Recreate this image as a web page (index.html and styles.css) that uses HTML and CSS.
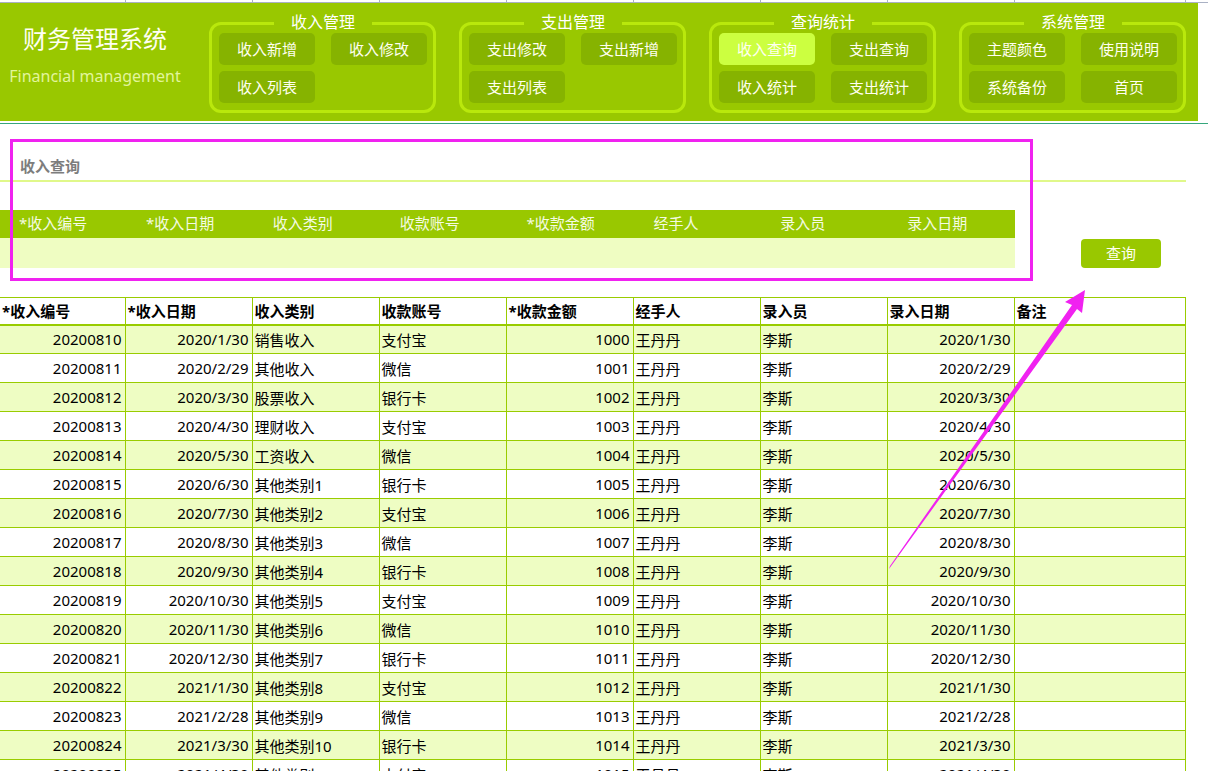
FILE: index.html
```html
<!DOCTYPE html>
<html lang="zh-CN">
<head>
<meta charset="utf-8">
<title>财务管理系统</title>
<link rel="stylesheet" href="styles.css">
</head>
<body>
<div class="sheet-top">
  <span class="c1"></span><span></span><span></span><span></span><span></span><span></span><span></span><span></span><span class="c9"></span>
</div>
<header class="banner">
  <div class="brand">
    <div class="brand-title">财务管理系统</div>
    <div class="brand-sub">Financial management</div>
  </div>
  <nav class="groups">
    <fieldset class="group">
      <legend>收入管理</legend>
      <div class="btns">
        <span class="btn">收入新增</span><span class="btn">收入修改</span><span class="btn">收入列表</span>
      </div>
    </fieldset>
    <fieldset class="group">
      <legend>支出管理</legend>
      <div class="btns">
        <span class="btn">支出修改</span><span class="btn">支出新增</span><span class="btn">支出列表</span>
      </div>
    </fieldset>
    <fieldset class="group">
      <legend>查询统计</legend>
      <div class="btns">
        <span class="btn active">收入查询</span><span class="btn">支出查询</span><span class="btn">收入统计</span><span class="btn">支出统计</span>
      </div>
    </fieldset>
    <fieldset class="group">
      <legend>系统管理</legend>
      <div class="btns">
        <span class="btn">主题颜色</span><span class="btn">使用说明</span><span class="btn">系统备份</span><span class="btn">首页</span>
      </div>
    </fieldset>
  </nav>
</header>
<div class="pane-line"></div>

<section class="query">
  <h2 class="query-title">收入查询</h2>
  <div class="query-row">
    <div class="query-form">
      <div class="qf-head">
        <span>*收入编号</span><span>*收入日期</span><span>收入类别</span><span>收款账号</span><span>*收款金额</span><span>经手人</span><span>录入员</span><span>录入日期</span>
      </div>
      <div class="qf-input"></div>
    </div>
    <button class="query-btn">查询</button>
  </div>
</section>

<table class="data">
  <colgroup>
    <col class="w1"><col class="w"><col class="w"><col class="w"><col class="w"><col class="w"><col class="w"><col class="w"><col class="wl">
  </colgroup>
  <thead>
    <tr><th>*收入编号</th><th>*收入日期</th><th>收入类别</th><th>收款账号</th><th>*收款金额</th><th>经手人</th><th>录入员</th><th>录入日期</th><th>备注</th></tr>
  </thead>
  <tbody>
    <tr><td class="r">20200810</td><td class="r">2020/1/30</td><td>销售收入</td><td>支付宝</td><td class="r">1000</td><td>王丹丹</td><td>李斯</td><td class="r">2020/1/30</td><td></td></tr>
    <tr><td class="r">20200811</td><td class="r">2020/2/29</td><td>其他收入</td><td>微信</td><td class="r">1001</td><td>王丹丹</td><td>李斯</td><td class="r">2020/2/29</td><td></td></tr>
    <tr><td class="r">20200812</td><td class="r">2020/3/30</td><td>股票收入</td><td>银行卡</td><td class="r">1002</td><td>王丹丹</td><td>李斯</td><td class="r">2020/3/30</td><td></td></tr>
    <tr><td class="r">20200813</td><td class="r">2020/4/30</td><td>理财收入</td><td>支付宝</td><td class="r">1003</td><td>王丹丹</td><td>李斯</td><td class="r">2020/4/30</td><td></td></tr>
    <tr><td class="r">20200814</td><td class="r">2020/5/30</td><td>工资收入</td><td>微信</td><td class="r">1004</td><td>王丹丹</td><td>李斯</td><td class="r">2020/5/30</td><td></td></tr>
    <tr><td class="r">20200815</td><td class="r">2020/6/30</td><td>其他类别1</td><td>银行卡</td><td class="r">1005</td><td>王丹丹</td><td>李斯</td><td class="r">2020/6/30</td><td></td></tr>
    <tr><td class="r">20200816</td><td class="r">2020/7/30</td><td>其他类别2</td><td>支付宝</td><td class="r">1006</td><td>王丹丹</td><td>李斯</td><td class="r">2020/7/30</td><td></td></tr>
    <tr><td class="r">20200817</td><td class="r">2020/8/30</td><td>其他类别3</td><td>微信</td><td class="r">1007</td><td>王丹丹</td><td>李斯</td><td class="r">2020/8/30</td><td></td></tr>
    <tr><td class="r">20200818</td><td class="r">2020/9/30</td><td>其他类别4</td><td>银行卡</td><td class="r">1008</td><td>王丹丹</td><td>李斯</td><td class="r">2020/9/30</td><td></td></tr>
    <tr><td class="r">20200819</td><td class="r">2020/10/30</td><td>其他类别5</td><td>支付宝</td><td class="r">1009</td><td>王丹丹</td><td>李斯</td><td class="r">2020/10/30</td><td></td></tr>
    <tr><td class="r">20200820</td><td class="r">2020/11/30</td><td>其他类别6</td><td>微信</td><td class="r">1010</td><td>王丹丹</td><td>李斯</td><td class="r">2020/11/30</td><td></td></tr>
    <tr><td class="r">20200821</td><td class="r">2020/12/30</td><td>其他类别7</td><td>银行卡</td><td class="r">1011</td><td>王丹丹</td><td>李斯</td><td class="r">2020/12/30</td><td></td></tr>
    <tr><td class="r">20200822</td><td class="r">2021/1/30</td><td>其他类别8</td><td>支付宝</td><td class="r">1012</td><td>王丹丹</td><td>李斯</td><td class="r">2021/1/30</td><td></td></tr>
    <tr><td class="r">20200823</td><td class="r">2021/2/28</td><td>其他类别9</td><td>微信</td><td class="r">1013</td><td>王丹丹</td><td>李斯</td><td class="r">2021/2/28</td><td></td></tr>
    <tr><td class="r">20200824</td><td class="r">2021/3/30</td><td>其他类别10</td><td>银行卡</td><td class="r">1014</td><td>王丹丹</td><td>李斯</td><td class="r">2021/3/30</td><td></td></tr>
    <tr><td class="r">20200825</td><td class="r">2021/4/30</td><td>其他类别11</td><td>支付宝</td><td class="r">1015</td><td>王丹丹</td><td>李斯</td><td class="r">2021/4/30</td><td></td></tr>
  </tbody>
</table>

<div class="annot-box"></div>
<svg class="annot-arrow" width="1208" height="771" viewBox="0 0 1208 771">
  <polygon points="889,569 1077,309 1082,313 1085,290 1065,302 1072,305 890,566" fill="#f022f0"/>
</svg>
</body>
</html>
```

FILE: styles.css
```css
* { box-sizing: border-box; }
html, body { margin: 0; padding: 0; }
body {
  width: 1208px;
  height: 771px;
  overflow: hidden;
  position: relative;
  background: #fff;
  font-family: "Noto Sans", "Noto Sans CJK SC", sans-serif;
  font-size: 15px;
  color: #000;
}

/* spreadsheet grid strip above the banner */
.sheet-top {
  display: flex;
  height: 3px;
  border-bottom: 1px solid #aab1c4;
}
.sheet-top span {
  width: 127px;
  height: 2px;
  border-right: 1px solid #aab1c4;
}
.sheet-top .c1 { width: 126px; }
.sheet-top .c9 { width: 171px; }

/* banner */
.banner {
  display: flex;
  width: 1198px;
  height: 118px;
  background: #99c800;
  padding-top: 10px;
}
.brand {
  width: 190px;
  text-align: center;
  padding-top: 10px;
}
.brand-title {
  font-size: 24px;
  line-height: 30px;
  color: #fffff2;
  font-family: "Noto Sans CJK SC", sans-serif;
}
.brand-sub {
  margin-top: 12px;
  font-size: 16px;
  line-height: 22px;
  color: #e2f59c;
}
.groups {
  display: flex;
  gap: 23px;
  margin-left: 19px;
}
.group {
  width: 227px;
  height: 100px;
  margin: 0;
  padding: 0 6px 5px 7px;
  border: 3px solid #b9e80c;
  border-radius: 12px;
  min-width: 0;
}
.group legend {
  margin: 0 auto;
  padding: 0 17px 3px;
  line-height: 17px;
  font-size: 16px;
  color: #ffffff;
  font-family: "Noto Sans CJK SC", sans-serif;
}
.btns {
  display: grid;
  grid-template-columns: 96px 96px;
  column-gap: 16px;
  row-gap: 6px;
}
.btn {
  display: flex;
  align-items: center;
  justify-content: center;
  height: 32px;
  padding-bottom: 1px;
  border-radius: 5px;
  background: #86b300;
  color: #fffff0;
  font-size: 15px;
  font-family: "Noto Sans CJK SC", sans-serif;
}
.btn.active {
  background: #ccff40;
}

.pane-line {
  margin-top: 2px;
  height: 1px;
  background: #36a77c;
}

/* query area */
.query-title {
  margin: 33px 0 0;
  width: 1186px;
  padding: 0 0 4px 20px;
  line-height: 19px;
  font-size: 15px;
  font-weight: bold;
  color: #7d7d7d;
  border-bottom: 2px solid #e0f88a;
}
.query-row {
  display: flex;
  align-items: flex-end;
  margin-top: 28px;
}
.query-form { width: 1015px; }
.qf-head {
  display: flex;
  height: 28px;
  padding-bottom: 3px;
  align-items: center;
  background: #99c800;
  color: #f4fbe2;
  font-size: 15px;
}
.qf-head span {
  width: 127px;
  padding-left: 19px;
  white-space: nowrap;
}
.qf-input {
  height: 30px;
  background: #effdc2;
}
.query-btn {
  margin: 0 0 0 66px;
  width: 80px;
  height: 29px;
  border: none;
  border-radius: 4px;
  background: #99c800;
  color: #fffff2;
  font-family: "Noto Sans CJK SC", sans-serif;
  font-size: 15px;
  padding: 0 0 2px;
}

/* data table */
.data {
  margin-top: 29px;
  width: 1185px;
  table-layout: fixed;
  border-collapse: collapse;
}
.data col.w1 { width: 125px; }
.data col.w { width: 127px; }
.data col.wl { width: 171px; }
.data th, .data td {
  border: 1px solid #99cc00;
  padding: 0 3px 0 2px;
  white-space: nowrap;
  overflow: hidden;
  font-size: 15px;
}
.data th:first-child, .data td:first-child { border-left: none; }
.data th {
  height: 27px;
  padding-bottom: 1px;
  text-align: left;
  font-weight: bold;
  border-bottom: 2px solid #99cc00;
}
.data td { height: 29px; padding-left: 2px; padding-bottom: 0; }
.data td.r { text-align: right; }
.data tbody tr:nth-child(odd) td { background: #eefdc3; }

/* annotation overlays */
.annot-box {
  position: absolute;
  left: 10px;
  top: 139px;
  width: 1023px;
  height: 142px;
  border: 3px solid #f022f0;
}
.annot-arrow {
  position: absolute;
  left: 0;
  top: 0;
  pointer-events: none;
}
```
